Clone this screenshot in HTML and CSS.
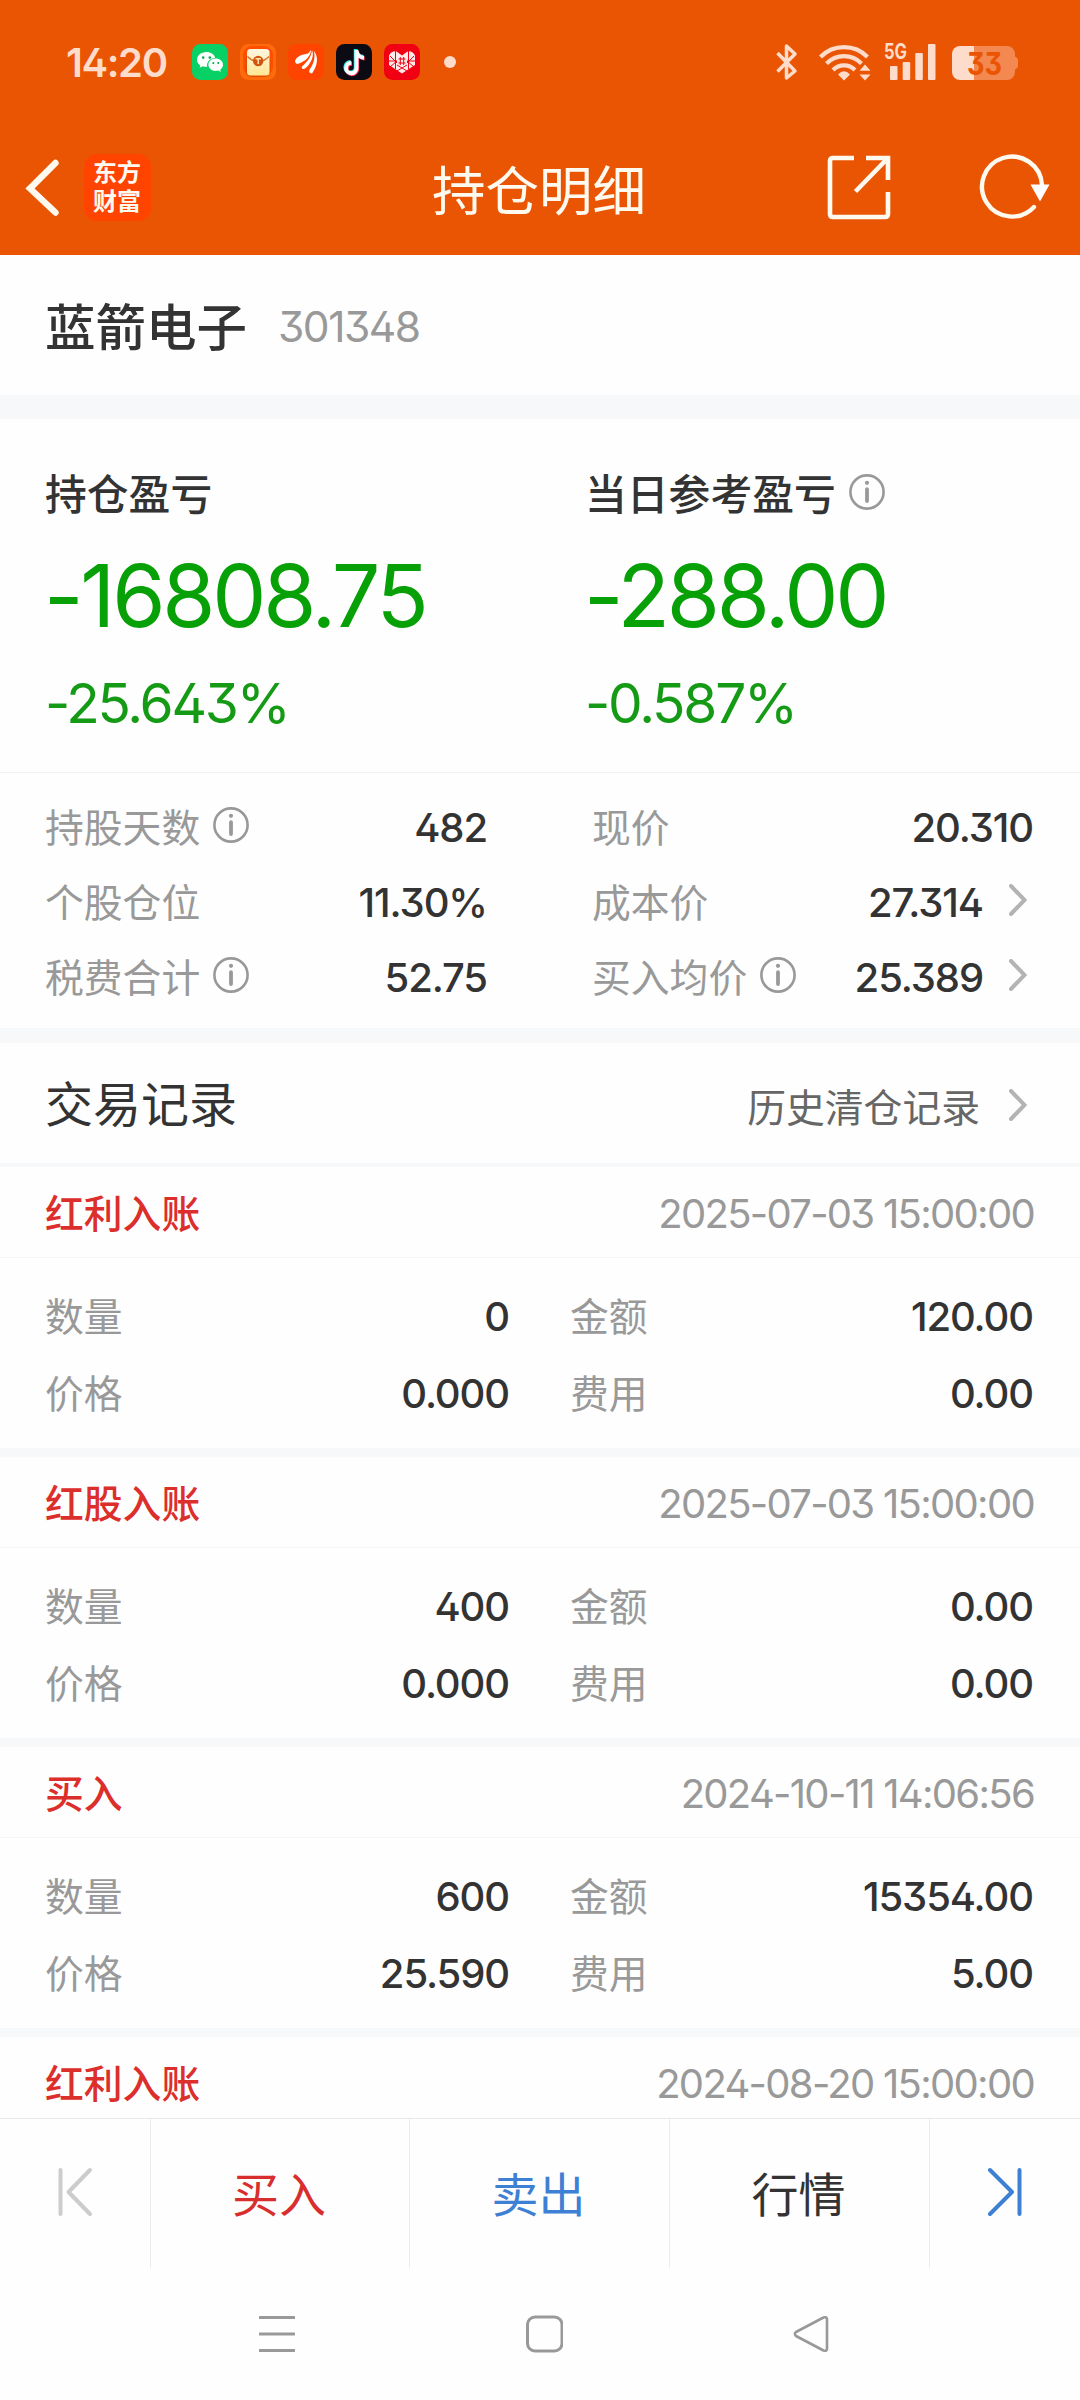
FILE: index.html
```html
<!DOCTYPE html>
<html lang="zh-CN">
<head>
<meta charset="utf-8">
<title>持仓明细</title>
<link rel="stylesheet" href="styles.css">
</head>
<body>
<svg class="defs" width="0" height="0" aria-hidden="true">
  <symbol id="info" viewBox="0 0 36 36"><circle cx="18" cy="18" r="16.6" fill="none" stroke="#999" stroke-width="2.6"/><circle cx="18" cy="8.8" r="2.1" fill="#999"/><path d="M18 15.2V27" stroke="#999" stroke-width="3.8" stroke-linecap="round"/></symbol>
  <symbol id="chev" viewBox="0 0 18 32"><path d="M2 2L15.500 16L2 30" fill="none" stroke="#b3b3b3" stroke-width="4" stroke-linecap="round"/></symbol>
</svg>
<div class="screen">
  <header class="header">
    <div class="status">
      <span class="clock">14:20</span>
      <div class="apps">
        <svg width="36" height="36" viewBox="0 0 36 36"><rect width="36" height="36" rx="8.500" fill="#07d065"/><path d="M14.500 8C9 8 5 11.600 5 15.700c0 2.400 1.300 4.400 3.300 5.700l-.6 2.400 3-1.500c1.200.4 2.500.5 3.800.5h.7c-1-5 3-9 8-8.900C22.400 10.400 18.800 8 14.500 8z" fill="#fff"/><path d="M31 20.700c0-3.500-3.300-6.200-7.300-6.200s-7.300 2.800-7.300 6.200 3.300 6.200 7.300 6.200c.9 0 1.700-.1 2.500-.3l2.600 1.300-.6-2.200c1.700-1.200 2.800-3 2.800-5z" fill="#fff"/><circle cx="11.200" cy="13.600" r="1.300" fill="#0bab55"/><circle cx="17.800" cy="13.600" r="1.300" fill="#0bab55"/><circle cx="21.300" cy="19" r="1.100" fill="#0bab55"/><circle cx="26.300" cy="19" r="1.100" fill="#0bab55"/></svg>
        <svg width="36" height="36" viewBox="0 0 36 36"><defs><linearGradient id="env" x2="0" y2="1"><stop stop-color="#fff6e2"/><stop offset="1" stop-color="#ffe792"/></linearGradient></defs><rect width="36" height="36" rx="8.500" fill="#ff6a0c"/><rect x="3" y="2" width="30" height="30" rx="9" fill="#ff4e00"/><rect x="5.500" y="9" width="25" height="24" rx="6" fill="#e14c00"/><rect x="7" y="5" width="22.500" height="26.500" rx="3.500" fill="url(#env)"/><path d="M7.500 12.500Q12 17.500 18.200 17.500T29 12.500" fill="none" stroke="#d9742a" stroke-width="1.300"/><circle cx="18.200" cy="17" r="5.200" fill="#cf5511"/><path d="M15.500 14.800h5.400M18.200 14.800v5.200" stroke="#ffe2a8" stroke-width="1.500"/></svg>
        <svg width="36" height="36" viewBox="0 0 36 36"><rect width="36" height="36" rx="8.500" fill="#ff4400"/><path d="M7 17C9 12 14 10.500 20 9.500c1.300-.8 2-2.500 2.500-3.500 1 2.500-1 5.500-3 8-2.500 3-5.500 4-8.500 5.600C8.500 20.500 7 19 7 17z" fill="#fff"/><path d="M14 22.500c4.500-4 9-8.500 10-16.200 2.200 5-.1 10-3 14.200-2 2.800-4.500 4.600-6 4.500-1 0-1.500-1.400-1-2.500z" fill="#fff"/><path d="M26 7c4.500 6 4 14-2 22.500-3-.5-3.500-2-2-4.500 3.500-5.500 5.500-10.500 4-18z" fill="#fff"/></svg>
        <svg width="36" height="36" viewBox="0 0 36 36"><rect width="36" height="36" rx="8.500" fill="#0c0b14"/><g fill="none" stroke-width="3.900"><path d="M18.200 5v18.500a5.200 5.200 0 1 1-5.200-5.500M18.200 6.500c1 4 4 6 7.500 6.300" transform="translate(1.500 0)" stroke="#26e6e4"/><path d="M18.200 5v18.500a5.200 5.200 0 1 1-5.200-5.500M18.200 6.500c1 4 4 6 7.500 6.300" transform="translate(3 1.800)" stroke="#f7315b"/><path d="M18.200 5v18.500a5.200 5.200 0 1 1-5.200-5.500M18.200 6.500c1 4 4 6 7.500 6.300" transform="translate(2.300 .9)" stroke="#fff"/></g></svg>
        <svg width="36" height="36" viewBox="0 0 36 36"><rect width="36" height="36" rx="8.500" fill="#f00012"/><path d="M5 11.500Q8 6.500 12.500 7.500L18 11.500 23.500 7.500Q28 6.500 31 11.500V21L18 29.500 5 21z" fill="#ffe9e9"/><path d="M5 17h8M23 17h8M11.500 7v18M24.500 7v18M6 12l7 7M30 12l-7 7M6 23l7-6M30 23l-7-6M13 27l10-6M23 27l-10-6M14.500 15h7M14.500 19h7M16.300 13v8M19.700 13v8" stroke="#f00012" stroke-width="1" fill="none"/></svg>
      </div>
      <span class="dot"></span>
      <svg class="system" width="250" height="40" viewBox="773 42 250 40">
        <g fill="none" stroke="#fddccb" stroke-width="3.500" stroke-linejoin="round"><path d="M777.500 53L795 71 786.500 78V46L795 54 777.500 71.500"/></g>
        <g fill="none" stroke="#fddccb" stroke-width="4.200"><path d="M820.500 57A33 33 0 0 1 867.500 57"/><path d="M826.500 63.500A24.500 24.500 0 0 1 861.500 63.500"/><path d="M833 70A15.500 15.500 0 0 1 855 70"/></g>
        <path d="M838 74.500Q844 68 850 74.500L844 80.500z" fill="#fddccb"/><path d="M859.500 70.800L865 64.500 870.500 70.800zM859.500 74.500L865 80.500 870.500 74.500z" fill="#fddccb"/>
        <text x="884" y="59" class="net" textLength="23" lengthAdjust="spacingAndGlyphs">5G</text>
        <g fill="#fddccb"><rect x="890" y="66" width="7.500" height="14" rx="1"/><rect x="902.700" y="62" width="7.500" height="18" rx="1"/><rect x="915.300" y="53" width="7.500" height="27" rx="1"/><rect x="928" y="44" width="7.500" height="36" rx="1"/></g>
        <path d="M974 46h33a8 8 0 0 1 8 8v2.500l1.500 1q1.500 .8 1.500 2.500v6q0 1.700-1.500 2.500l-1.500 1V72a8 8 0 0 1-8 8H974z" fill="#f38850"/><path d="M974 46H960a8 8 0 0 0-8 8V72a8 8 0 0 0 8 8h14z" fill="#fddccb"/>
        <text x="967" y="74.500" class="batt" textLength="35" lengthAdjust="spacingAndGlyphs">33</text>
      </svg>
    </div>
    <div class="navbar">
      <svg width="34" height="60" viewBox="0 0 34 60"><path d="M30.500 5L5 30.500 30.500 54.500" fill="none" stroke="#fffaf0" stroke-width="6.400" stroke-linecap="round"/></svg>
      <div class="logo">东方财富</div>
      <h1 class="title">持仓明细</h1>
      <svg class="share" width="66" height="66" viewBox="0 0 66 66"><path d="M28 4H7Q4 4 4 7V60Q4 63 7 63H59Q62 63 62 60V38M40 4H62V26M61 5L29.500 37.500" fill="none" stroke="#fffaf0" stroke-width="4.600"/></svg>
      <svg class="reload" width="74" height="68" viewBox="0 0 74 68"><path d="M65 32A30 30 0 1 0 57 54" fill="none" stroke="#fffaf0" stroke-width="4.400" stroke-linecap="round"/><path d="M53.500 31.500H72.500L63 48.500z" fill="#fff"/></svg>
    </div>
  </header>

  <section class="stock"><h2 class="stock-name">蓝箭电子</h2><span class="stock-code">301348</span></section>

  <section class="profit">
    <div class="profit-col">
      <div class="profit-label">持仓盈亏</div>
      <div class="profit-value">-16808.75</div>
      <div class="profit-rate">-25.643%</div>
    </div>
    <div class="profit-col">
      <div class="profit-label">当日参考盈亏<svg class="info"><use href="#info"/></svg></div>
      <div class="profit-value">-288.00</div>
      <div class="profit-rate">-0.587%</div>
    </div>
  </section>

  <section class="stats">
    <dl class="stats-col left">
      <div class="stat"><dt>持股天数<svg class="info"><use href="#info"/></svg></dt><dd>482</dd></div>
      <div class="stat"><dt>个股仓位</dt><dd>11.30%</dd></div>
      <div class="stat"><dt>税费合计<svg class="info"><use href="#info"/></svg></dt><dd>52.75</dd></div>
    </dl>
    <dl class="stats-col right">
      <div class="stat"><dt>现价</dt><dd>20.310</dd></div>
      <div class="stat"><dt>成本价</dt><dd>27.314<svg class="chev"><use href="#chev"/></svg></dd></div>
      <div class="stat"><dt>买入均价<svg class="info"><use href="#info"/></svg></dt><dd>25.389<svg class="chev"><use href="#chev"/></svg></dd></div>
    </dl>
  </section>

  <section class="records-head"><h3>交易记录</h3><a class="history">历史清仓记录<svg class="chev"><use href="#chev"/></svg></a></section>

  <main class="records">
    <article class="record">
      <div class="record-head"><b>红利入账</b><time>2025-07-03 15:00:00</time></div>
      <dl class="record-body"><dt>数量</dt><dd>0</dd><dt>金额</dt><dd>120.00</dd><dt>价格</dt><dd>0.000</dd><dt>费用</dt><dd>0.00</dd></dl>
    </article>
    <article class="record">
      <div class="record-head"><b>红股入账</b><time>2025-07-03 15:00:00</time></div>
      <dl class="record-body"><dt>数量</dt><dd>400</dd><dt>金额</dt><dd>0.00</dd><dt>价格</dt><dd>0.000</dd><dt>费用</dt><dd>0.00</dd></dl>
    </article>
    <article class="record">
      <div class="record-head"><b>买入</b><time>2024-10-11 14:06:56</time></div>
      <dl class="record-body"><dt>数量</dt><dd>600</dd><dt>金额</dt><dd>15354.00</dd><dt>价格</dt><dd>25.590</dd><dt>费用</dt><dd>5.00</dd></dl>
    </article>
    <article class="record">
      <div class="record-head"><b>红利入账</b><time>2024-08-20 15:00:00</time></div>
    </article>
  </main>

  <footer class="actions">
    <span><svg width="36" height="50" viewBox="0 0 36 50"><path d="M3.500 3V47M33 3L11.500 25 33 47" fill="none" stroke="#ccc" stroke-width="4" stroke-linecap="round" stroke-linejoin="round"/></svg></span>
    <span class="buy">买入</span>
    <span class="sell">卖出</span>
    <span>行情</span>
    <span><svg width="36" height="50" viewBox="0 0 36 50"><path d="M32.500 3V47M3 3L25 25 3 47" fill="none" stroke="#3e80d3" stroke-width="4" stroke-linecap="round" stroke-linejoin="round"/></svg></span>
  </footer>
  <nav class="system-nav">
    <svg width="36" height="38" viewBox="0 0 36 38"><path d="M1 2.500H35M1 19H35M1 35.500H35" stroke="#999" stroke-width="3" stroke-linecap="round"/></svg>
    <svg width="38" height="38" viewBox="0 0 38 38"><rect x="2.500" y="2" width="34.500" height="34" rx="7.500" fill="none" stroke="#999" stroke-width="3"/></svg>
    <svg width="36" height="38" viewBox="0 0 36 38"><path d="M30.500 2.500L3 17Q.8 19 3 21L30.500 35.500Q34 36.500 34 33.500V4.500Q34 1.500 30.500 2.500z" fill="none" stroke="#999" stroke-width="2.600" stroke-linejoin="round"/></svg>
  </nav>
</div>
</body>
</html>
```
FILE: styles.css
```css
* { box-sizing: border-box; margin: 0; padding: 0; }
body { background: #fefefe; color: #333; font-family: "Noto Sans CJK SC", sans-serif; }
.defs { position: absolute; }
.screen { width: 1080px; height: 2400px; display: flex; flex-direction: column; overflow: hidden; }
.screen > * { flex: none; }
svg { display: block; flex: none; }

.header { height: 255px; background: #ea5504; color: #fffaf0; }
.status { height: 122px; padding: 2px 0 0 66px; display: flex; align-items: center; color: #fddccb; }
.clock { width: 126px; font: 600 40px Inter, sans-serif; letter-spacing: -1.4px; }
.apps { display: flex; gap: 12px; }
.dot { width: 12px; height: 12px; margin-left: 24px; border-radius: 50%; background: #fddccb; }
.system { margin-left: 317px; overflow: visible; }
.net { font: 700 21px Inter, sans-serif; fill: #fddccb; }
.batt { font: 700 31px Inter, sans-serif; fill: #ea5504; }
.navbar { height: 131px; padding-left: 25px; display: flex; align-items: center; }
.logo { width: 67px; height: 67px; margin-left: 25px; padding: 2px 8px 0 9px; border-radius: 13px; background: #ff4400; font-weight: 700; font-size: 24px; line-height: 29px; }
.title { margin-left: 281px; width: 216px; font-size: 53.5px; font-weight: 400; line-height: 80px; white-space: nowrap; }
.share { margin: 0 0 2px 178px; }
.reload { margin: 0 0 2px 85px; }

.stock { height: 164px; padding-left: 45px; display: flex; align-items: center; border-bottom: 24px solid #f7f8fa; }
.stock-name { width: 233px; font-size: 50.5px; font-weight: 500; line-height: 70px; padding-bottom: 3px; }
.stock-code { padding-top: 3px; font: 400 42.5px Inter, sans-serif; letter-spacing: -1.5px; color: #999; }

.profit { height: 354px; padding: 0 45px; display: grid; grid-template-columns: 540px 1fr; border-bottom: 1px solid #f2f2f2; }
.profit-label { height: 98px; padding-top: 43px; font-size: 41.8px; font-weight: 500; line-height: 60px; display: flex; align-items: flex-start; }
.profit-label .info { margin: 12px 0 0 13px; }
.profit-value { height: 156px; margin-left: -1px; font: 400 86px/158px Inter, sans-serif; letter-spacing: -3.2px; color: #07a007; }
.profit-rate { font: 400 55px/60px Inter, sans-serif; letter-spacing: -2.2px; color: #149a14; }
.profit-value, .profit-rate { white-space: nowrap; }
.info { width: 36px; height: 36px; }
.chev { width: 18px; height: 32px; margin-left: 26px; }

.stats { height: 270px; padding: 17px 47px 0 45px; display: flex; justify-content: space-between; border-bottom: 15px solid #f7f8fa; }
.stats-col.left { width: 442px; }
.stats-col.right { width: 441px; }
.stat { height: 75px; display: flex; align-items: center; justify-content: space-between; }
dt { font-size: 38.8px; color: #999; line-height: 56px; padding-bottom: 6px; display: flex; align-items: center; }
dt .info { margin-left: 13px; }
dd { font: 500 40px/56px Inter, sans-serif; letter-spacing: -1.1px; display: flex; align-items: center; white-space: nowrap; }
dd .chev { margin-right: 6px; margin-bottom: 5px; }

.records-head { height: 124px; padding: 0 53px 0 45px; display: flex; align-items: center; justify-content: space-between; border-bottom: 4px solid #f7f8f9; }
.records-head h3 { font-size: 48px; font-weight: 400; line-height: 70px; padding-bottom: 4px; }
.history { font-size: 38.8px; color: #666; display: flex; align-items: center; padding-top: 3px; }
.history .chev { margin-left: 29px; }

.records { height: 951px; overflow: hidden; }
.record { height: 290px; border-bottom: 9px solid #f7f8fa; }
.record-head { height: 91px; padding: 2px 45px 0; display: flex; align-items: center; justify-content: space-between; border-bottom: 1px solid #f5f5f5; }
.record-head b { font-size: 38.8px; font-weight: 500; color: #dc2e2b; padding-bottom: 4px; }
time { font: 400 40px Inter, sans-serif; letter-spacing: -1.7px; margin-right: 1px; color: #999; }
.record-body { padding: 20px 47px 0 45px; display: grid; grid-template-columns: 123px 341px 122px 1fr; grid-auto-rows: 77px; align-items: center; }
.record-body dt:nth-of-type(even) { padding-left: 61px; white-space: nowrap; }
.record-body dd { justify-content: flex-end; }

.actions { height: 150px; border-top: 1px solid #e8e8e8; display: grid; grid-template-columns: 151px 259px 260px 260px 1fr; }
.actions span { display: flex; align-items: center; justify-content: center; padding: 0 2px 4px 0; font-size: 47px; border-right: 1px solid #ececec; }
.actions span:first-child { padding-right: 0; }
.actions span:last-child { padding-right: 0; border: 0; }
.buy { color: #d82e2d; }
.sell { color: #3e80d3; }
.system-nav { height: 132px; padding-left: 259px; display: flex; align-items: center; gap: 230px; }

/* Flat-topped three and open four in every number */
.clock, .batt, .stock-code, .profit-value, .profit-rate, dd, time { font-feature-settings: "cv09", "cv02"; }
```
